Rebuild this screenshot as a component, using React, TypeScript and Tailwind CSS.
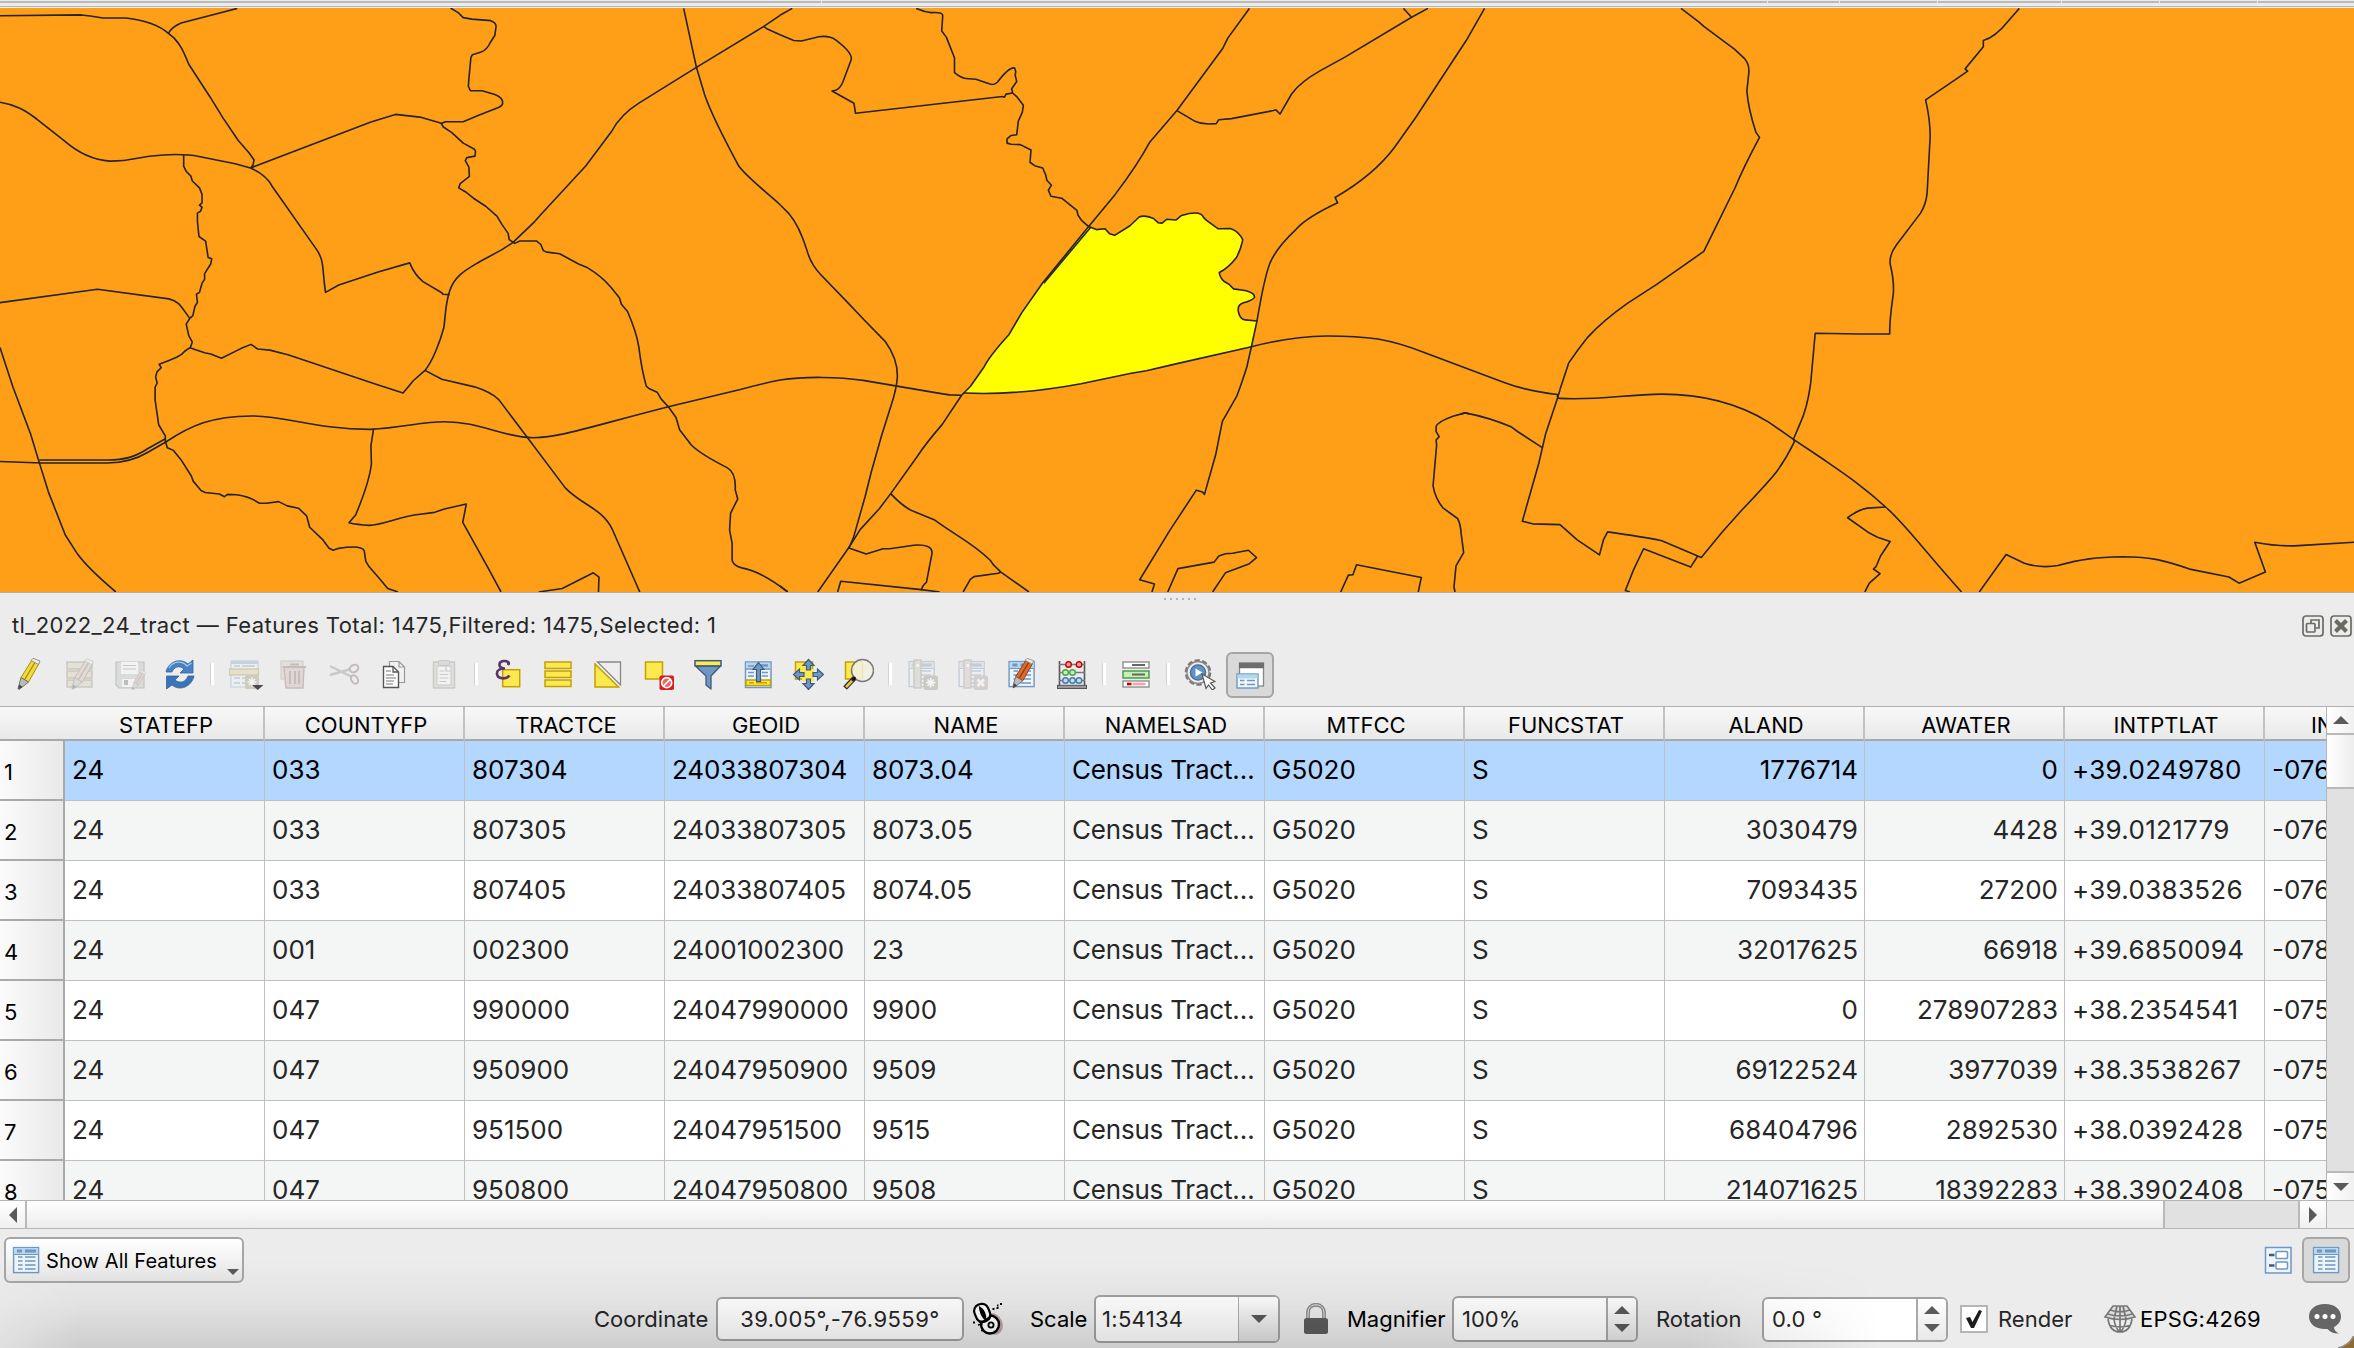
import React from "react";

const westLines = [
  "M0 41L159 39L177 42L202 47L247 47C285 53 312 66 330 87L341 99C354 119 357 126 370 168L412 254L437 308L467 367L488 399L498 418L496 431L491 439",
  "M465 22L355 60Q338 69 330 87",
  "M0 267C30 273 50 289 72 311L125 367C150 396 177 418 215 421C265 422 262 409 320 405C345 403 375 405 390 409L461 428L491 439C513 452 527 470 533 486L622 655C636 685 631 700 638 764L664 745L741 711L803 687Q812 717 829 736L866 765L868 769L881 770",
  "M491 439L727 319L775 299L823 306L865 322",
  "M883 21L898 33L908 46L925 50L962 54Q974 60 972 72L970 92L961 111Q954 131 943 136L926 143L923 150L919 206L918 226L922 237L945 237L970 247Q986 256 985 268Q986 276 977 281L937 302L908 318L873 318L865 323L869 332L885 346L908 374L930 390L932 396L931 408L915 412L912 420L919 437L920 461L902 480L899 491L912 501L928 518L952 539L974 565L984 587L996 610L998 626L1009 636L1019 630L1052 630L1060 639L1065 655L1072 659L1097 663L1134 690L1152 700Q1180 723 1197 750L1214 778L1218 795L1230 814Q1248 870 1252 906Q1258 970 1267 1010L1273 1016L1288 1025L1296 1043L1310 1063L1325 1091L1332 1123L1355 1163Q1373 1187 1425 1222Q1443 1235 1441 1280L1446 1304L1432 1341L1430 1385L1435 1420L1435 1465Q1439 1480 1454 1484C1485 1491 1520 1522 1544 1547",
  "M360 406L360 434L365 448L374 460L377 473L391 491L396 508L396 530L391 536L396 542L393 552L387 557L387 580L390 618L403 630L408 673L415 676L413 690L401 715L401 730L396 740L391 764L385 769L387 790L382 801L378 825L372 832L365 847L370 877L377 894L373 908L362 918L356 926L347 933L330 943L312 952L316 961L308 971L305 985L308 1001L304 1012L304 1045L311 1110L324 1139L324 1153L328 1170L340 1177L355 1202L375 1244L379 1258L394 1282L402 1287L430 1291L440 1298L446 1292L464 1293Q490 1298 508 1315L522 1315L546 1311L563 1322L585 1328L601 1348L607 1378L633 1411L645 1433L653 1438L664 1433Q710 1423 714 1440L717 1467L724 1482L742 1509L760 1538L780 1547",
  "M0 791L191 756L331 781C352 788 354 800 372 832",
  "M0 908L25 1010L60 1134L77 1209L95 1286L128 1398L152 1448Q172 1485 227 1547",
  "M372 909L401 922L413 925L434 936L472 911L492 900L505 912L529 915L566 928L737 1004L790 1027L810 995L833 968C847 946 862 896 870 856C873 830 872 800 881 762C890 720 915 704 940 684L983 653L1005 634L1048 579L1062 558L1148 434L1199 343Q1216 300 1253 269L1365 176L1497 69L1529 40",
  "M1340 22L1365 176L1381 247Q1395 303 1448 434C1465 465 1505 505 1529 535",
  "M833 968L866 991L930 1011Q963 1025 978 1045L1034 1144L1108 1275C1140 1320 1180 1328 1200 1383L1254 1547",
  "M0 1206L82 1210L210 1210C240 1210 265 1202 290 1182L325 1155C375 1111 415 1088 493 1087C560 1087 620 1122 725 1122C790 1118 825 1102 872 1102C940 1102 985 1143 1045 1144C1100 1142 1135 1123 1310 1063L1451 1018Q1495 1002 1529 993",
  "M77 1202L210 1202C245 1202 265 1194 290 1172L325 1146",
  "M732 1122L727 1165L728 1212Q724 1260 697 1346L684 1366Q700 1371 724 1373C745 1373 785 1351 812 1346L852 1339L871 1330L914 1317L907 1365L955 1480L982 1547",
  "M1056 1547L1102 1538L1163 1497L1174 1508L1173 1547",
  "M1497 69L1504 76L1529 91",
];

const midLines = [
  "M0 40L24 22",
  "M0 91L27 106L42 107L76 96Q96 92 109 104Q145 140 139 158L123 215Q118 231 109 236L102 238L145 270L148 296L436 252L440 254L443 246L456 243",
  "M267 22Q283 31 296 33Q318 31 319 40L317 81L326 97L342 151L342 190Q355 204 364 205L384 207L410 219Q419 224 426 215Q450 173 460 178L462 187L461 197L464 213L454 232L456 243L465 254L477 275L475 293L467 317L464 352L453 354L445 363L445 374L453 377L471 378L492 392L490 424L499 433L515 439L521 458L523 471L532 484L526 497L531 513L552 518L582 550L584 562L591 576L605 592",
  "M920 22L878 99L868 126L778 289L725 371Q700 433 657 508L605 592L515 739L473 819L449 874Q410 931 400 959L373 1010L356 1033L318 1109Q285 1160 270 1191L217 1290L195 1329L157 1384L136 1429L74 1547",
  "M609 594L517 740",
  "M778 289L812 316Q825 324 840 324L855 323L860 313L885 310L967 289L972 287L980 298L1003 245Q1020 214 1060 184L1109 148L1238 45L1270 22",
  "M1222 22L1238 45",
  "M1381 22L1345 106L1307 183L1246 307L1205 384C1185 420 1150 468 1088 516L1093 530Q1032 568 1011 600Q967 655 957 700Q947 743 935 838L924 906L915 959Q904 1005 895 1036L867 1101L854 1188L832 1292L828 1286L816 1281L765 1384L705 1515L734 1526L729 1547",
  "M605 592L620 600L637 598L646 611L656 615L686 590L704 567Q714 561 732 571L741 582L749 583L758 573L776 575L787 563Q825 548 830 568L836 576L859 598L883 597Q900 605 907 627Q903 653 895 672Q879 700 861 712Q862 725 870 735L881 744L889 755L914 760Q931 767 930 777Q926 785 907 792Q897 797 898 812Q901 836 912 836L935 839",
  "M0 535L18 559Q38 590 53 655Q60 690 80 718L130 787L167 839L206 892Q231 938 230 985Q229 1015 216 1067L199 1139L179 1233L167 1297L144 1405L135 1432L169 1448L202 1434L215 1434L262 1425Q299 1421 298 1446L287 1522Q279 1530 277 1543",
  "M0 993C50 983 115 985 163 994L313 1028L332 1032L356 1033",
  "M360 1027C440 1032 530 1018 590 1003L686 976L718 969L776 951L924 906C980 887 1020 879 1072 878Q1130 878 1172 886C1210 895 1243 911 1260 920L1418 999Q1460 1021 1524 1031L1524 1040L1529 1041",
  "M1529 1018L1524 1040L1501 1132L1487 1212L1455 1362L1475 1369L1529 1371",
  "M1494 1170L1447 1129L1434 1116Q1390 1091 1343 1079L1319 1088Q1288 1103 1286 1115L1286 1128L1292 1141L1286 1150L1287 1163L1280 1270Q1284 1303 1300 1328L1328 1355Q1334 1369 1335 1394L1340 1444L1325 1479L1321 1534L1323 1547",
  "M1334 1082L1343 1079L1352 1082",
  "M217 1290Q240 1323 259 1335L302 1358L318 1373C355 1407 382 1425 412 1464L419 1477L433 1495L488 1547",
  "M433 1495L428 1498L380 1507L373 1514L359 1547",
  "M113 1547L119 1519L277 1541L313 1547",
  "M0 1531L15 1547",
  "M760 1547L780 1486L851 1469L860 1453L873 1447L887 1446L918 1438L934 1457L920 1473L873 1497L848 1547",
  "M1099 1547L1114 1503L1123 1502L1130 1476L1257 1509L1251 1547",
];

const eastLines = [
  "M239 22L274 57L284 69L345 129L365 154Q374 168 373 189L369 238Q372 285 387 346L394 359Q362 438 346 490L301 611L284 657L191 743L133 793Q85 838 55 881Q35 914 17 949L0 1018",
  "M907 22L884 57Q860 97 836 106L836 122L800 180L805 186L783 206L722 261Q731 312 731 357L725 504Q723 533 712 557L665 639Q650 665 652 690Q662 745 657 780Q651 835 651 873L592 873L504 871L495 1002Q488 1069 474 1107L461 1148L463 1154Q447 1198 428 1232Q417 1252 357 1336L320 1391L279 1457L201 1413Q164 1403 94 1390L86 1410L78 1450L34 1411L0 1371",
  "M272 1453L258 1482L165 1434L145 1490L129 1543L138 1547",
  "M0 1041C70 1047 130 1031 201 1030C290 1030 360 1061 412 1103L461 1148L514 1195C560 1237 597 1269 643 1325C680 1367 720 1440 793 1547",
  "M643 1325L607 1328Q590 1331 568 1353L611 1393L627 1404L652 1415L633 1453L624 1481L619 1487L632 1499L611 1524L602 1547",
  "M828 1547L881 1449L917 1472Q950 1486 983 1478C1030 1461 1060 1456 1110 1455C1170 1456 1190 1463 1246 1488L1321 1508L1341 1524L1393 1495L1372 1417Q1420 1429 1458 1426L1568 1417",
];

const parcel =
  "M605 592L620 600L637 598L646 611L656 615L686 590L704 567Q714 561 732 571L741 582L749 583L758 573L776 575L787 563Q825 548 830 568L836 576L859 598L883 597Q900 605 907 627Q903 653 895 672Q879 700 861 712Q862 725 870 735L881 744L889 755L914 760Q931 767 930 777Q926 785 907 792Q897 797 898 812Q901 836 912 836L935 839L924 906L776 951L718 969L686 976L590 1003C530 1018 440 1032 360 1027L373 1010L400 959Q410 931 449 874L473 819L515 739Z";

function Lines({ paths, transform }: { paths: string[]; transform: string }) {
  return (
    <g transform={transform}>
      {paths.map((d, i) => (
        <path key={i} d={d} vectorEffect="non-scaling-stroke" />
      ))}
    </g>
  );
}

function MapCanvas() {
  return (
    <svg className="block h-[584px] w-[2354px] shrink-0 bg-[#ff9e17]" viewBox="0 8 2354 584">
      <g transform="translate(780 0) scale(.5102 .38265)">
        <path d={parcel} fill="#ffff00" />
      </g>
      <g fill="none" stroke="#232323" strokeWidth="1.6" strokeLinejoin="round">
        <Lines paths={westLines} transform="scale(.5102 .38265)" />
        <Lines paths={midLines} transform="translate(780 0) scale(.5102 .38265)" />
        <Lines paths={eastLines} transform="translate(1560 0) scale(.50638 .38265)" />
      </g>
    </svg>
  );
}

function Icon({ children, faded = false }: { children: React.ReactNode; faded?: boolean }) {
  return (
    <svg width="32" height="32" viewBox="0 0 32 32" className={faded ? "shrink-0 opacity-35 saturate-[.55]" : "shrink-0"} fill="none">
      {children}
    </svg>
  );
}

const Y = "#fce94f";
const YS = "#c4a000";
const B = "#6d97c4";

const Sheet = ({ x = 3, y = 3 }: { x?: number; y?: number }) => (
  <g transform={`translate(${x} ${y})`}>
    <rect x=".6" y=".6" width="25" height="25" fill="#eef4fb" stroke={B} strokeWidth="1.4" />
    <rect x="1.2" y="1.2" width="24" height="6" fill="#b5d7ee" />
    <path d="M4 4h5M12 4h11" stroke={B} strokeWidth="3" />
    <path d="M1 7.5h25" stroke={B} strokeWidth="1" />
    <path d="M5 10h4.500M5 14h4.500M5 18h4.500M5 22h4.500M12 10h10.500M12 14h10.500M12 18h10.500M12 22h10.500" stroke={B} strokeWidth="1.300" />
  </g>
);

const Pencil = ({ body, dark, x = 0, y = 0, s = 1 }: { body: string; dark: string; x?: number; y?: number; s?: number }) => (
  <g transform={`translate(${x} ${y}) scale(${s})`}>
    <path d="M7 20L18 2.500L25 6L14.500 24.500Z" fill={body} stroke={dark} strokeWidth="1" />
    <path d="M11 21.500L21.500 4" stroke={dark} strokeWidth="1.400" />
    <path d="M17 3L19 .8L26 3.500L24.500 7Z" fill="#eee" stroke="#888" strokeWidth=".9" />
    <path d="M7 20L14.500 24.500L5 32L4 31Z" fill="#bbb" stroke="#666" strokeWidth=".9" />
    <path d="M5.500 27L4 32L8.500 29.500Z" fill="#444" />
  </g>
);

const toolbar: (React.ReactNode | "sep")[] = [
  <Icon><Pencil body="#f2dc3c" dark="#a58d10" x={0} y={-0.5} /></Icon>,
  <Icon faded>
    {[4, 13, 22].map((y) => <rect key={y} x="3" y={y} width="25" height="7" fill="#d9cd9a" stroke="#8f8350" strokeWidth="1.400" />)}
    <Pencil body="#d9b9a6" dark="#8b6350" x={4} y={0} s={0.98} />
  </Icon>,
  <Icon faded>
    <path d="M2 4H30V30H5L2 27Z" fill="#b8bfbc" stroke="#777" strokeWidth="1.200" />
    <rect x="7" y="4" width="17" height="12" fill="#fff" /><path d="M9 7.500h13M9 11h13" stroke="#888" strokeWidth="1.200" />
    <rect x="8" y="21" width="13" height="8" fill="#fff" /><rect x="10" y="22" width="4" height="5" fill="#666" />
    <Pencil body="#d9a58e" dark="#8b6350" x={15.500} y={12} s={0.62} />
  </Icon>,
  <Icon>
    <path d="M2 14C4 4 16 -1 24 6L29 2V15H16L20 11C15 7 10 9 8 14Z" fill="#4682c3" stroke="#2f66a5" strokeWidth=".8" />
    <path d="M30 18C28 28 16 34 8 27L2.500 31V18H15L11 22C16 26 22 24 24 18Z" fill="#3b74b5" stroke="#2f66a5" strokeWidth=".8" />
    <path d="M5 10C9 3 18 2 23 8L27.500 5" stroke="#a9c9ea" strokeWidth="1.200" />
  </Icon>,
  "sep",
  <svg width="38" height="32" viewBox="0 0 38 32" className="ml-1.5 shrink-0" fill="none">
    <g opacity=".38">
      <rect x="3" y="3" width="27" height="26" fill="#f3f6fa" stroke="#8faac6" strokeWidth="1.200" />
      <path d="M3 4.500h27" stroke="#8faac6" strokeWidth="3" />
      <path d="M6 8h6M14 8h13M6 20h6M6 25h6M14 20h5M14 25h4" stroke="#7c94b0" strokeWidth="1.600" />
      <rect x="1.500" y="11" width="29" height="6" fill="#d9cf97" stroke="#9c8f4f" strokeWidth="1.200" />
      <rect x="17" y="17" width="14" height="14" rx="2" fill="#9c9a70" />
      <path d="M24 19.500v9M19.500 24h9M21 21l6 6M27 21l-6 6" stroke="#fff" strokeWidth="1.600" />
    </g>
    <path d="M24 27H35.500L29.700 32Z" fill="#4a4a4a" />
  </svg>,
  <Icon faded>
    <rect x="3" y="3" width="22" height="18" fill="#d6cfa5" stroke="#a39a6a" strokeWidth="1.200" />
    <path d="M6 9H26L25 30H8Z" fill="#dba9a9" stroke="#a55b5b" strokeWidth="1.400" /><path d="M4.500 9H28M12 6.500h9M12 13v13M17 13v13M21 13v13" stroke="#a55b5b" strokeWidth="2" />
  </Icon>,
  <Icon faded>
    <path d="M2 8L24 19M2 17L23 11" stroke="#888" strokeWidth="2.400" />
    <ellipse cx="26" cy="10.500" rx="4.500" ry="3.500" stroke="#8d5a5a" strokeWidth="2" transform="rotate(-30 26 10.500)" />
    <ellipse cx="26.500" cy="21.500" rx="3.200" ry="4.500" stroke="#8d5a5a" strokeWidth="2" transform="rotate(-30 26.500 21.500)" />
  </Icon>,
  <Icon>
    <path d="M11.500 3.500H21L26.500 9V24.500H11.500Z" fill="#f1f1f1" stroke="#999" strokeWidth="1.200" />
    <path d="M21 3.500V9H26.500" stroke="#999" strokeWidth="1.200" />
    <path d="M5.500 8.500H15L20.500 14V29.500H5.500Z" fill="#fff" stroke="#555" strokeWidth="1.400" />
    <path d="M15 8.500V14H20.500" stroke="#555" strokeWidth="1.300" />
    <path d="M8 13h5M8 17h8M8 20h10M8 23h8M8 26h7" stroke="#777" strokeWidth="1.200" />
  </Icon>,
  <Icon faded>
    <rect x="5.500" y="4" width="21" height="26" fill="#cfcab6" stroke="#88846f" strokeWidth="1.400" />
    <rect x="9" y="8" width="14" height="19" fill="#fff" stroke="#888" /><rect x="10.500" y="2.500" width="11" height="5" rx="1" fill="#bbb" stroke="#888" />
    <path d="M11.500 13h5M11.500 16.500h9M11.500 20h9M11.500 23.500h7M18 8v5h5" stroke="#888" strokeWidth="1.200" />
  </Icon>,
  "sep",
  <Icon>
    <rect x="10.700" y="11.700" width="17" height="17" fill={Y} stroke={YS} strokeWidth="1.500" />
    <path d="M17 5.500C15.500 1.500 7 2.500 7.500 7C7.800 9.500 10 10.500 13 10.500C8 10.500 4.500 12 5 16C5.500 21 14 22 17.500 17.500" stroke="#5c3566" strokeWidth="2.600" />
    <circle cx="16.500" cy="5.800" r="1.600" fill="#5c3566" />
  </Icon>,
  <Icon>
    {[4, 13, 22].map((y) => <rect key={y} x="3" y={y} width="26" height="6.500" fill={Y} stroke={YS} strokeWidth="1.500" />)}
  </Icon>,
  <Icon>
    <path d="M5.500 4H28.500V27Z" fill="#eee" stroke="#888" strokeWidth="1.300" />
    <path d="M3 6V29H26.500Z" fill={Y} stroke={YS} strokeWidth="1.500" />
  </Icon>,
  <Icon>
    <rect x="3.500" y="4" width="17" height="17" fill={Y} stroke={YS} strokeWidth="1.500" />
    <rect x="17.500" y="17.500" width="14.500" height="14.500" rx="1.800" fill="#d81e1e" />
    <circle cx="24.700" cy="24.700" r="5" fill="#e66" stroke="#fff" strokeWidth="1.700" /><path d="M21.500 28L28 21.500" stroke="#fff" strokeWidth="1.700" />
  </Icon>,
  <Icon>
    <path d="M3.500 8H28.500L19 18V31L14 27V18Z" fill={B} stroke="#415a75" strokeWidth="1.300" strokeLinejoin="round" />
    <rect x="3" y="2.700" width="26" height="5.200" fill={Y} stroke="#415a75" strokeWidth="1.500" />
  </Icon>,
  <Icon>
    <rect x="3.500" y="4" width="25.500" height="25.500" fill="#eef4fb" stroke={B} strokeWidth="1.500" />
    <rect x="4.200" y="4.700" width="24" height="5.500" fill="#b5d7ee" />
    <path d="M6 8h6M20 8h6M4 11h24M6 14.500h6M6 18h6M20 14.500h6M20 18h6M15 7h11" stroke={B} strokeWidth="1.500" />
    <rect x="4" y="22" width="24.500" height="5.500" fill={Y} stroke={YS} strokeWidth="1.500" />
    <path d="M7 24.800h5M14 24.800h11" stroke={YS} strokeWidth="1.400" />
    <path d="M16.500 4.500L22 11.500H18.500V23.500H14.500V11.500H11Z" fill={B} stroke="#415a75" strokeWidth="1.200" />
  </Icon>,
  <Icon>
    <rect x="3.500" y="4" width="17" height="17" fill={Y} stroke={YS} strokeWidth="1.500" />
    <rect x="10" y="11" width="12" height="12" fill={Y} />
    <g fill={B} stroke="#415a75" strokeWidth="1.200">
      <path d="M16.500 1.500L22 7.500H18.500V12H14.500V7.500H11Z" />
      <path d="M16.500 31.500L22 25.500H18.500V21H14.500V25.500H11Z" />
      <path d="M1.500 16.500L7.500 11V14.500H12V18.500H7.500V22Z" />
      <path d="M31.500 16.500L25.500 11V14.500H21V18.500H25.500V22Z" />
    </g>
  </Icon>,
  <Icon>
    <rect x="3.500" y="4" width="17" height="17" fill={Y} stroke={YS} strokeWidth="1.500" />
    <path d="M3 30L12 20.500" stroke="#333" strokeWidth="5" /><path d="M4 29.200L10 22.800" stroke="#f4bf45" strokeWidth="2.600" />
    <circle cx="20.500" cy="12.500" r="11" fill="#f2f0dc" fillOpacity=".92" stroke="#777" strokeWidth="1.500" />
    <path d="M20.500 5V20" stroke="#e6dfa0" strokeWidth="1" opacity=".6" /><circle cx="12" cy="20.500" r="2" fill="#111" />
  </Icon>,
  "sep",
  <Icon faded>
    <Sheet x={2.500} y={3} /><rect x="8" y="2" width="7" height="28" fill="#c8c5a8" stroke="#8c8868" strokeWidth="1.300" /><rect x="10.500" y="6" width="2.500" height="3" fill="#fff" />
    <rect x="17.500" y="17.500" width="14.500" height="14.500" rx="2" fill="#8f8b66" /><path d="M24.700 20v9.500M20 24.700h9.500M21.500 21.500l6.500 6.500M28 21.500l-6.500 6.500" stroke="#fff" strokeWidth="1.700" />
  </Icon>,
  <Icon faded>
    <Sheet x={2.500} y={3} /><rect x="8" y="2" width="7" height="28" fill="#dcb9b9" stroke="#ad8585" strokeWidth="1.300" /><rect x="10.500" y="6" width="2.500" height="3" fill="#fff" />
    <rect x="17.500" y="17.500" width="14.500" height="14.500" rx="2" fill="#b39a9a" /><path d="M21.500 21.500l6.500 6.500M28 21.500l-6.500 6.500" stroke="#fff" strokeWidth="2.600" />
  </Icon>,
  <Icon><Sheet x={2.500} y={3} /><Pencil body="#e0692c" dark="#8a3f14" x={3} y={-0.5} s={0.95} /></Icon>,
  <Icon>
    <path d="M3.500 3V27M28.500 3V27" stroke="#555" strokeWidth="1.600" />
    <path d="M3 6.500h26M3 14.500h26M3 22.500h26" stroke="#777" strokeWidth="1.400" />
    <rect x="1.500" y="27.300" width="29" height="3.200" fill="#999" stroke="#555" />
    <g fill="#f7a3a3" stroke="#c00" strokeWidth="1.400"><circle cx="12.500" cy="6.500" r="2.800" /><circle cx="23" cy="6.500" r="2.800" /></g>
    <g fill="#c0efc0" stroke="#4aa54a" strokeWidth="1.400"><circle cx="9.500" cy="14.500" r="2.800" /><circle cx="16.500" cy="14.500" r="2.800" /></g>
    <g fill="#c3ddf5" stroke="#457aab" strokeWidth="1.400"><circle cx="9.500" cy="22.500" r="2.800" /><circle cx="16.500" cy="22.500" r="2.800" /><circle cx="23" cy="22.500" r="2.800" /></g>
  </Icon>,
  "sep",
  <Icon>
    <rect x="3" y="4" width="26" height="6" fill="#fff" stroke="#888" strokeWidth="1.300" /><path d="M12 7h13" stroke="#666" strokeWidth="2" />
    <rect x="3" y="13" width="26" height="7" fill="#c4f0b5" stroke="#4e9a4e" strokeWidth="1.500" /><path d="M12 16.500h13" stroke="#666" strokeWidth="2" />
    <rect x="3" y="23" width="26" height="6" fill="#fff" stroke="#888" strokeWidth="1.300" /><path d="M7 26h4.500" stroke="#b00" strokeWidth="2.600" /><path d="M12.500 26h13" stroke="#f5a3a3" strokeWidth="2.600" />
  </Icon>,
  "sep",
  <Icon>
    <circle cx="14" cy="14.500" r="12" stroke="#777" strokeWidth="2.600" strokeDasharray="5.200 2.340" />
    <circle cx="14" cy="14.500" r="11" fill="#ececec" stroke="#888" strokeWidth="1.300" />
    <circle cx="14" cy="14.500" r="7.600" fill="#5f92c9" stroke="#46678c" strokeWidth="1.300" />
    <path d="M11.500 10.500L18.500 14.500L11.500 18.500Z" fill="#fff" />
    <path d="M18 16L31 23.500L26.500 25L31 30L28.500 32L24.500 27L22 30.500Z" fill="#fff" stroke="#555" strokeWidth="1.200" />
  </Icon>,
];

function TableGlyph() {
  return <svg width="32" height="32" viewBox="0 0 32 32" fill="none" className="shrink-0"><Sheet x={3} y={3} /></svg>;
}

function Pressed({ children }: { children: React.ReactNode }) {
  return (
    <div className="flex h-[46px] w-12 items-center justify-center rounded-md border-2 border-[#a6a6a6] bg-[#d9d9d9]">{children}</div>
  );
}

function Toolbar() {
  return (
    <div className="flex h-[50px] items-center pl-[5px]">
      {toolbar.map((t, i) =>
        t === "sep" ? (
          <div key={i} className="flex w-3.5 justify-center">
            <div className="h-[22px] w-1 border-r-[3px] border-l border-r-white border-l-[#d2d2d2]" />
          </div>
        ) : (
          <div key={i} className="flex w-[50px] justify-center">{t}</div>
        ),
      )}
      <div className="flex w-[50px] justify-center pt-0.5">
        <Pressed>
          <Icon>
            <rect x="5.500" y="4" width="24" height="23" fill="#fff" stroke="#888" strokeWidth="1.300" />
            <path d="M5 6.500H30" stroke="#6e6e6e" strokeWidth="5.500" />
            <rect x="3" y="15" width="21" height="14" fill="#f2f7fc" stroke={B} strokeWidth="1.400" />
            <path d="M3.500 17.500H23.500" stroke="#b5d7ee" strokeWidth="4" />
            <path d="M6 21.500h4.500M13 21.500h8M6 25.500h4.500M13 25.500h8" stroke={B} strokeWidth="1.600" />
          </Icon>
        </Pressed>
      </div>
    </div>
  );
}

const columns = ["STATEFP", "COUNTYFP", "TRACTCE", "GEOID", "NAME", "NAMELSAD", "MTFCC", "FUNCSTAT", "ALAND", "AWATER", "INTPTLAT", "INTPTLON"];
const rows = [
  ["24", "033", "807304", "24033807304", "8073.04", "Census Tract…", "G5020", "S", "1776714", "0", "+39.0249780", "-076"],
  ["24", "033", "807305", "24033807305", "8073.05", "Census Tract…", "G5020", "S", "3030479", "4428", "+39.0121779", "-076"],
  ["24", "033", "807405", "24033807405", "8074.05", "Census Tract…", "G5020", "S", "7093435", "27200", "+39.0383526", "-076"],
  ["24", "001", "002300", "24001002300", "23", "Census Tract…", "G5020", "S", "32017625", "66918", "+39.6850094", "-078"],
  ["24", "047", "990000", "24047990000", "9900", "Census Tract…", "G5020", "S", "0", "278907283", "+38.2354541", "-075"],
  ["24", "047", "950900", "24047950900", "9509", "Census Tract…", "G5020", "S", "69122524", "3977039", "+38.3538267", "-075"],
  ["24", "047", "951500", "24047951500", "9515", "Census Tract…", "G5020", "S", "68404796", "2892530", "+38.0392428", "-075"],
  ["24", "047", "950800", "24047950800", "9508", "Census Tract…", "G5020", "S", "214071625", "18392283", "+38.3902408", "-075"],
];

function cellFit(column: number) {
  if (column === 3) return "tracking-[-0.1px] ";
  if (column === 5) return "tracking-[-0.2px] ";
  if (column === 8 || column === 9) return "justify-end ";
  if (column === 10) return "tracking-[0.3px] ";
  return "";
}

function Table() {
  return (
    <div className="flex h-[493px] w-[2326px] flex-col overflow-hidden">
      <div className="flex h-[34px] w-[2465px] shrink-0 bg-linear-to-b from-[#f8f8f8] to-[#e8e8e8]">
        <div className="w-[65px] shrink-0 border-b-2 border-[#a9a9a9]" />
        {columns.map((c) => (
          <div key={c} className="flex w-[200px] shrink-0 items-center justify-center border-r-2 border-b-2 border-r-[#c2c2c2] border-b-[#a9a9a9] pt-1 pl-1 text-[22px] leading-none text-black">
            {c}
          </div>
        ))}
      </div>
      {rows.map((r, i) => (
        <div key={i} className="flex h-[60px] w-[2465px] shrink-0">
          <div className="flex w-[65px] shrink-0 items-center border-r-2 border-b-2 border-[#a9a9a9] bg-linear-to-r from-[#fbfbfb] to-[#e9e9e9] pt-1 pl-1 text-[22px] text-black">{i + 1}</div>
          {r.map((v, j) => (
            <div
              key={j}
              className={
                "flex w-[200px] shrink-0 items-center border-r border-b border-[#c0c0c0] pr-1.5 pb-0.5 pl-[7px] text-[26px] whitespace-nowrap " +
                cellFit(j) +
                (i === 0 ? "bg-[#b3d7ff] text-black" : i % 2 ? "bg-[#f4f5f5] text-[#262626]" : "bg-white text-[#262626]")
              }
            >
              {v}
            </div>
          ))}
        </div>
      ))}
    </div>
  );
}

function Arrow({ dir, w = 16, h = 8 }: { dir: "up" | "down" | "left" | "right"; w?: number; h?: number }) {
  const d = { up: "M0 8L8 0L16 8Z", down: "M0 0H16L8 8Z", left: "M16 0V8L0 4Z", right: "M0 0V8L16 4Z" }[dir];
  return (
    <svg width={w} height={h} viewBox="0 0 16 8" preserveAspectRatio="none" className="shrink-0">
      <path d={d} fill="#5a5a5a" />
    </svg>
  );
}

function VScroll() {
  return (
    <div className="flex h-[493px] w-7 flex-col border-l border-[#b5b5b5]">
      <div className="flex h-7 items-center justify-center border-b-2 border-[#b9b9b9] bg-linear-to-r from-white to-[#f0f0f0]"><Arrow dir="up" /></div>
      <div className="h-[54px] border-b-2 border-[#b9b9b9] bg-linear-to-r from-white to-[#ededed]" />
      <div className="flex-1 bg-[#e1e1e1]" />
      <div className="flex h-[29px] items-center justify-center border-t-2 border-[#b9b9b9] bg-linear-to-r from-white to-[#f0f0f0]"><Arrow dir="down" /></div>
    </div>
  );
}

function HScroll() {
  return (
    <div className="flex h-[29px] shrink-0 border-y border-[#b5b5b5]">
      <div className="flex w-[27px] items-center justify-center border-r-2 border-[#b9b9b9] bg-linear-to-b from-white to-[#f0f0f0]"><Arrow dir="left" w={8} h={16} /></div>
      <div className="w-[2138px] border-r-2 border-[#b9b9b9] bg-linear-to-b from-white to-[#ececec]" />
      <div className="flex-1 bg-[#e1e1e1]" />
      <div className="flex w-7 items-center justify-center border-l-2 border-[#b9b9b9] bg-linear-to-b from-white to-[#f0f0f0]"><Arrow dir="right" w={8} h={16} /></div>
      <div className="w-7 border-l border-[#b5b5b5] bg-[#ececec]" />
    </div>
  );
}

function Stepper() {
  return (
    <div className="flex w-[30px] flex-col items-center justify-center gap-2.5 border-l-2 border-[#a9a9a9] bg-linear-to-b from-white to-[#e8e8e8]">
      <Arrow dir="up" />
      <Arrow dir="down" />
    </div>
  );
}

const field = "flex rounded-md border-2 border-[#a3a3a3] bg-white overflow-hidden ";

function StatusBar() {
  return (
    <div className="flex h-[58px] items-center pl-[594px] text-[22px] whitespace-nowrap text-[#262626]">
      <div className="w-[122px]">Coordinate</div>
      <div className={field + "h-11 w-[248px] items-center justify-center tracking-[0.45px]"}>39.005°,-76.9559°</div>
      <svg width="32" height="34" viewBox="0 0 32 34" className="ml-2" fill="none">
        <ellipse cx="22" cy="22" rx="8.500" ry="11" fill="#b9a5a5" transform="rotate(-20 22 22)" />
        <circle cx="18" cy="22.500" r="9" fill="#fff" stroke="#000" strokeWidth="2.400" />
        <path d="M10.500 22L6 23M12 28.500L9 28.500" stroke="#000" strokeWidth="1.600" />
        <rect x="3" y="2" width="14.500" height="18" rx="6.500" fill="#fff" stroke="#000" strokeWidth="2.200" transform="rotate(-22 10 11)" />
        <path d="M7.500 5C8 11 10 15 13.500 18C14.500 13 11.500 7 7.500 5Z" fill="#000" stroke="#000" strokeWidth="1.200" />
        <path d="M7 19.500Q13 21 19 13.500" stroke="#000" strokeWidth="2.200" />
        <circle cx="19" cy="23" r="2.600" stroke="#000" strokeWidth="1.800" />
        <path d="M20.500 7h2M24.500 6h2M28 2h2M25 3.500h1.500M1 20.500h2M4 17h2" stroke="#000" strokeWidth="2" />
      </svg>
      <div className="ml-[26px] w-16 text-black">Scale</div>
      <div className={field + "h-12 w-[186px]"}>
        <div className="flex flex-1 items-center pl-1.5 tracking-[0.3px]">1:54134</div>
        <div className="flex w-10 items-center justify-center border-l border-[#b0b0b0] bg-linear-to-b from-white to-[#e0e0e0]"><Arrow dir="down" /></div>
      </div>
      <svg width="26" height="32" viewBox="0 0 26 32" className="ml-[23px]" fill="none">
        <path d="M5 16V10C5 -1 21 -1 21 10V16" stroke="#8b8d89" strokeWidth="3.800" />
        <path d="M5 16V10C5 -1 21 -1 21 10V16" stroke="#e5e5e5" strokeWidth="1" />
        <rect x="1" y="15" width="24" height="16" rx="2.500" fill="#5c5c5c" />
      </svg>
      <div className="ml-[18px] w-[105px] text-black">Magnifier</div>
      <div className={field + "h-[46px] w-[186px]"}>
        <div className="flex flex-1 items-center pl-2">100%</div>
        <Stepper />
      </div>
      <div className="ml-[18px] w-[106px]">Rotation</div>
      <div className={field + "h-[45px] w-[186px]"}>
        <div className="flex flex-1 items-center pl-2 tracking-[0.2px]">0.0 °</div>
        <Stepper />
      </div>
      <div className="ml-3 flex size-7 items-center justify-center border-2 border-[#b5b5b5] bg-white">
        <svg width="20" height="20" viewBox="0 0 20 20"><path d="M2 9L6 8L8.500 13L15 1L18 2L10 19H7Z" fill="#1c1c1c" /></svg>
      </div>
      <div className="ml-2.5 w-[105px]">Render</div>
      <svg width="34" height="30" viewBox="0 0 34 30" fill="none" stroke="#777" strokeWidth="1.700">
        <path d="M10 2H24L32 13Q17 18 2 13Z" fill="#ddd" />
        <path d="M14 2L11 15M20 2L23 15M7 6Q17 9.500 27 6M4.500 10Q17 14 29.500 10M17 2V28M5 15Q7 28 17 28Q27 28 29 15M11 15Q12 24 17 28Q22 24 23 15M6 21Q17 25 28 21" />
      </svg>
      <div className="ml-[3px] w-[168px] tracking-[0.2px] text-black">EPSG:4269</div>
      <svg width="34" height="32" viewBox="0 0 34 32">
        <path d="M17 1C27 1 33 6.500 33 13.500C33 18.500 30 22 26 24Q26 28 31 30.500Q24 31 19.500 26C8 27 1 21 1 13.500C1 6.500 7 1 17 1Z" fill="#666" />
        <g fill="#fff"><circle cx="9" cy="13.500" r="2.500" /><circle cx="17" cy="13.500" r="2.500" /><circle cx="25" cy="13.500" r="2.500" /></g>
      </svg>
    </div>
  );
}

export default function App() {
  return (
    <div className="relative flex h-[1348px] w-[2354px] flex-col overflow-hidden bg-[#ececec] font-[Inter,sans-serif]">
      <div className="relative h-2 shrink-0">
        <div className="mt-px h-0.5 bg-[#b9bbb7]" />
        <div className="mt-[3px] h-px bg-[#b5b5b5]" />
        {[821, 1767, 1839, 1937, 2061, 2159, 2257].map((x) => (
          <div key={x} className="absolute top-0 h-1 w-px bg-[#e8e8e8]" style={{ left: x }} />
        ))}
      </div>
      <MapCanvas />
      <div className="flex h-[11px] shrink-0 items-start justify-center gap-1 border-t border-[#b0b0b0] pt-[5px] pl-1.5">
        {[0, 1, 2, 3, 4, 5].map((n) => (
          <div key={n} className="size-0.5 bg-[#b4b4b4]" />
        ))}
      </div>
      <div className="flex h-[45px] shrink-0 items-center gap-1.5 pr-0.5 pl-3">
        <div className="flex-1 text-[22px] tracking-[0.41px] text-[#262626]">tl_2022_24_tract — Features Total: 1475,Filtered: 1475,Selected: 1</div>
        <svg width="22" height="22" viewBox="0 0 22 22" fill="none" stroke="#6b6a64">
          <rect x="1" y="1" width="20" height="20" rx="3" strokeWidth="1.700" />
          <rect x="4.500" y="8.500" width="8.500" height="8.500" rx="1" strokeWidth="1.700" />
          <path d="M9 8V5H17V13H13.500" strokeWidth="1.700" />
        </svg>
        <svg width="22" height="22" viewBox="0 0 22 22" fill="none" stroke="#6b6a64">
          <rect x="1" y="1" width="20" height="20" rx="3" strokeWidth="1.700" />
          <path d="M5.500 5.500L16.500 16.500M16.500 5.500L5.500 16.500" strokeWidth="4.200" />
        </svg>
      </div>
      <div className="h-[59px] shrink-0 border-b border-[#b0b0b0] pt-px"><Toolbar /></div>
      <div className="flex shrink-0">
        <Table />
        <VScroll />
      </div>
      <HScroll />
      <div className="flex h-[61px] shrink-0 items-center justify-between pr-1 pl-1">
        <div className="flex h-[46px] w-60 items-center rounded-md border-2 border-[#a6a6a6] bg-linear-to-b from-white to-[#e6e6e6] pl-1">
          <TableGlyph />
          <div className="ml-1 w-[175px] pt-0.5 text-xl tracking-[0.1px] whitespace-nowrap text-black">Show All Features</div>
          <div className="mt-6 ml-1.5"><Arrow dir="down" w={12} h={6} /></div>
        </div>
        <div className="flex items-center gap-2">
          <svg width="32" height="32" viewBox="0 0 32 32" fill="none">
            <rect x="3.500" y="3.500" width="25.500" height="25.500" fill="#eef4fb" stroke={B} strokeWidth="1.500" />
            <path d="M7 11h5.500M7 21.500h5.500" stroke="#415a75" strokeWidth="2.400" />
            <rect x="14" y="7.500" width="11.500" height="7" rx="1" fill="#fff" stroke={B} strokeWidth="1.500" />
            <rect x="14" y="18" width="11.500" height="7" rx="1" fill="#fff" stroke={B} strokeWidth="1.500" />
          </svg>
          <Pressed><TableGlyph /></Pressed>
        </div>
      </div>
      <StatusBar />
      <div className="pointer-events-none absolute inset-x-0 bottom-0 h-[88px] bg-linear-to-b from-transparent via-black/4 to-black/13 [mask-image:linear-gradient(to_right,rgba(0,0,0,.4),black_80px,black_1690px,transparent_1880px)]" />
      <svg className="absolute right-0 bottom-0" width="18" height="12" viewBox="0 0 18 12">
        <path d="M18 0Q14 9 3 12H18Z" fill="#8d6b35" />
        <path d="M18 -1Q14 9 2 12" fill="none" stroke="#888" strokeWidth="1.500" />
      </svg>
    </div>
  );
}
